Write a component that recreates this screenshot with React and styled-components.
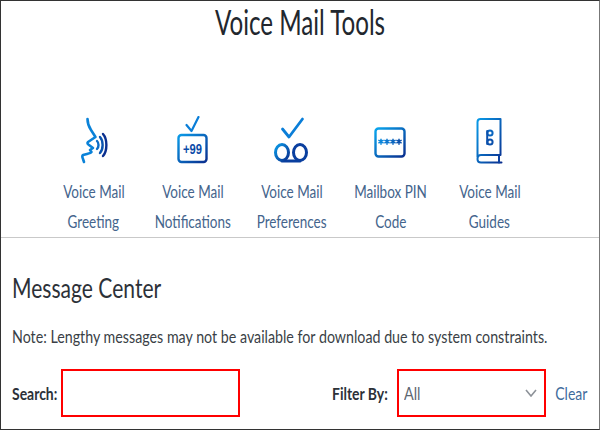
import React from 'react';
import styled, { createGlobalStyle, css } from 'styled-components';

const Global = createGlobalStyle`
	html, body {
		margin: 0;
		padding: 0;
		background: #fff;
	}
`;

const gradientStops = id => (
	<defs>
		<linearGradient id={id} x1="0" y1="0" x2="1" y2="1">
			<stop offset="0" stopColor="#0a9be8" />
			<stop offset="1" stopColor="#0a2f8f" />
		</linearGradient>
	</defs>
);

function GreetingIcon() {
	return (
		<svg width="50" height="50" viewBox="0 0 50 50" fill="none" strokeLinecap="round" strokeLinejoin="round">
			<path d="M18.5 3 C18.5 8 20 11 22 14 L26.5 21 L19 26 C18 27 18.5 28 20 29 L24 32 L21 34 L22.5 36 C22 37 20 37.5 18 38 L14 39 C13 40 13 41 14 43 L15 46" stroke="#0a82d8" strokeWidth="2.6" />
			<path d="M28 25 C30 27 30 31 28 33" stroke="#0a6cc8" strokeWidth="2.4" />
			<path d="M31 21 C34.5 25 34.5 33 31 37" stroke="#0a54b0" strokeWidth="2.4" />
			<path d="M34 18 C38.5 23 38.5 35 34 40" stroke="#0a2f8f" strokeWidth="2.4" />
		</svg>
	);
}

function BadgeIcon() {
	return (
		<svg width="50" height="50" viewBox="0 0 50 50" fill="none" strokeLinecap="round" strokeLinejoin="round">
			{gradientStops('g2')}
			<path d="M18.5 9 L23.5 15 L30.5 1" stroke="#0a7ed8" strokeWidth="2.2" />
			<rect x="10.5" y="19" width="28" height="27" rx="3" stroke="url(#g2)" strokeWidth="2.4" />
			<text x="24.5" y="37.5" textAnchor="middle" textLength="19" lengthAdjust="spacingAndGlyphs" fontFamily="'Liberation Sans', sans-serif" fontWeight="700" fontSize="15" fill="#0a4aa8">+99</text>
		</svg>
	);
}

function TapeIcon() {
	return (
		<svg width="50" height="50" viewBox="0 0 50 50" fill="none" strokeLinecap="round" strokeLinejoin="round">
			{gradientStops('g3')}
			<path d="M15.5 13 L22 21 L35.5 3" stroke="#0a7ed8" strokeWidth="2.8" />
			<path d="M15 45 H33" stroke="#0a3f9f" strokeWidth="3" />
			<ellipse cx="15" cy="36.5" rx="6.5" ry="8" stroke="url(#g3)" strokeWidth="3" />
			<ellipse cx="33" cy="36.5" rx="6.5" ry="8" stroke="#0a3f9f" strokeWidth="3" />
		</svg>
	);
}

function Star({ x, color }) {
	return (
		<path
			d={`M${x} 22.7 V28.7 M${x - 2.6} 24.2 L${x + 2.6} 27.2 M${x - 2.6} 27.2 L${x + 2.6} 24.2`}
			stroke={color}
			strokeWidth="1.5"
		/>
	);
}

function PinIcon() {
	return (
		<svg width="50" height="50" viewBox="0 0 50 50" fill="none">
			<defs>
				<linearGradient id="g4" x1="0" y1="0" x2="1" y2="1">
					<stop offset="0" stopColor="#0aa6ee" />
					<stop offset="1" stopColor="#0a2f8f" />
				</linearGradient>
			</defs>
			<rect x="9.5" y="12.5" width="29" height="28" rx="3" stroke="url(#g4)" strokeWidth="2.4" />
			<Star x={15} color="#0a86dc" />
			<Star x={21} color="#0a76d0" />
			<Star x={27} color="#0a66c0" />
			<Star x={33} color="#0a50ac" />
		</svg>
	);
}

function GuideIcon() {
	return (
		<svg width="50" height="50" viewBox="0 0 50 50" fill="none" strokeLinecap="round" strokeLinejoin="round">
			{gradientStops('g5')}
			<path d="M12.5 41 V6 Q12.5 3 15.5 3 H35.5 V39 H16 Q12.5 39 12.5 43 Q12.5 46.5 16 46.5 H36.5" stroke="url(#g5)" strokeWidth="2" />
			<path d="M34 39 V46.5" stroke="#0a3f9f" strokeWidth="2" />
			<circle cx="25" cy="17" r="2.6" stroke="#0a66c0" strokeWidth="2" />
			<circle cx="25" cy="26" r="2.6" stroke="#0a50ac" strokeWidth="2" />
			<path d="M22.2 15 V28" stroke="#0a50ac" strokeWidth="2" />
		</svg>
	);
}

const tools = [
	{ id: 'greeting', icon: <GreetingIcon />, lines: ['Voice Mail', 'Greeting'] },
	{ id: 'notifications', icon: <BadgeIcon />, lines: ['Voice Mail', 'Notifications'] },
	{ id: 'preferences', icon: <TapeIcon />, lines: ['Voice Mail', 'Preferences'] },
	{ id: 'pin', icon: <PinIcon />, lines: ['Mailbox PIN', 'Code'] },
	{ id: 'guides', icon: <GuideIcon />, lines: ['Voice Mail', 'Guides'] },
];

export default function App() {
	return (
		<>
			<Global />
			<Frame>
				<Title>Voice Mail Tools</Title>
				<ToolRow>
					{tools.map(tool => (
						<Tool key={tool.id}>
							<IconWrap>{tool.icon}</IconWrap>
							<ToolLabel>{tool.lines[0]}</ToolLabel>
							<ToolLabel>{tool.lines[1]}</ToolLabel>
						</Tool>
					))}
				</ToolRow>
				<Divider />
				<Section>
					<Heading>Message Center</Heading>
					<Note>Note: Lengthy messages may not be available for download due to system constraints.</Note>
					<FilterBar>
						<Field>
							<FieldLabel $width={49}>Search:</FieldLabel>
							<SearchBox />
						</Field>
						<FilterSide>
							<FieldLabel $width={65}>Filter By:</FieldLabel>
							<SelectBox>
								<SelectValue>All</SelectValue>
								<svg width="12" height="8" viewBox="0 0 12 8" fill="none">
									<path d="M1 1 L6 7 L11 1" stroke="#8d9299" strokeWidth="1.6" />
								</svg>
							</SelectBox>
							<ClearLink>Clear</ClearLink>
						</FilterSide>
					</FilterBar>
				</Section>
			</Frame>
		</>
	);
}

// the source page's font is narrow, nothing installed has those widths
const squeezed = (x, origin = 'left') => css`
	transform: scaleX(${x});
	transform-origin: ${origin} center;
	white-space: nowrap;
`;

const Frame = styled.div`
	box-sizing: border-box;
	width: 600px;
	height: 430px;
	border: 1px solid #333;
	border-right-color: #777;
	overflow: hidden;
	background: #fff;
	font-family: Lato, 'Liberation Sans', sans-serif;
`;
const Title = styled.h1`
	margin: 0;
	height: 108px;
	text-align: center;
	font-weight: 400;
	font-size: 35px;
	line-height: 40px;
	color: #22272e;
	${squeezed(0.69, 'center')}
`;
const ToolRow = styled.div`
	display: flex;
	padding-left: 43px;
`;
const Tool = styled.div`
	width: 99px;
	display: flex;
	flex-direction: column;
	align-items: center;
`;
const IconWrap = styled.div`
	height: 67px;
	padding-top: 7px;
	box-sizing: border-box;
`;
const ToolLabel = styled.div`
	font-size: 18px;
	line-height: 30px;
	color: #44648c;
	${squeezed(0.75, 'center')}
`;
const Divider = styled.div`
	height: 1px;
	margin-top: 1px;
	background: #c9c9c9;
`;
const Section = styled.div`
	padding: 0 11px;
`;
const Heading = styled.h2`
	margin: 33px 0 0;
	font-weight: 400;
	font-size: 26px;
	line-height: 34px;
	color: #2c3138;
	${squeezed(0.81)}
`;
const Note = styled.p`
	margin: 20px 0 0;
	font-size: 17px;
	line-height: 24px;
	color: #3a3f46;
	${squeezed(0.838)}
`;
const FilterBar = styled.div`
	display: flex;
	justify-content: space-between;
	align-items: center;
	margin-top: 20px;
`;
const Field = styled.div`
	display: flex;
	align-items: center;
`;
const FilterSide = styled.div`
	display: flex;
	align-items: center;
`;
const FieldLabel = styled.label`
	width: ${props => props.$width}px;
	font-weight: 700;
	font-size: 17px;
	color: #2c3138;
	${squeezed(0.82)}
`;
const SearchBox = styled.div`
	box-sizing: border-box;
	width: 179px;
	height: 48px;
	border: 2px solid #f00;
	background: #fff;
`;
const SelectBox = styled.div`
	box-sizing: border-box;
	width: 149px;
	height: 48px;
	padding: 0 7px 0 5px;
	border: 2px solid #f00;
	display: flex;
	align-items: center;
	justify-content: space-between;
`;
const SelectValue = styled.span`
	font-size: 18px;
	color: #5d6670;
	${squeezed(0.8)}
`;
const ClearLink = styled.a`
	width: 42px;
	font-size: 18px;
	color: #3f6c9c;
	${squeezed(0.78, 'right')}
`;
